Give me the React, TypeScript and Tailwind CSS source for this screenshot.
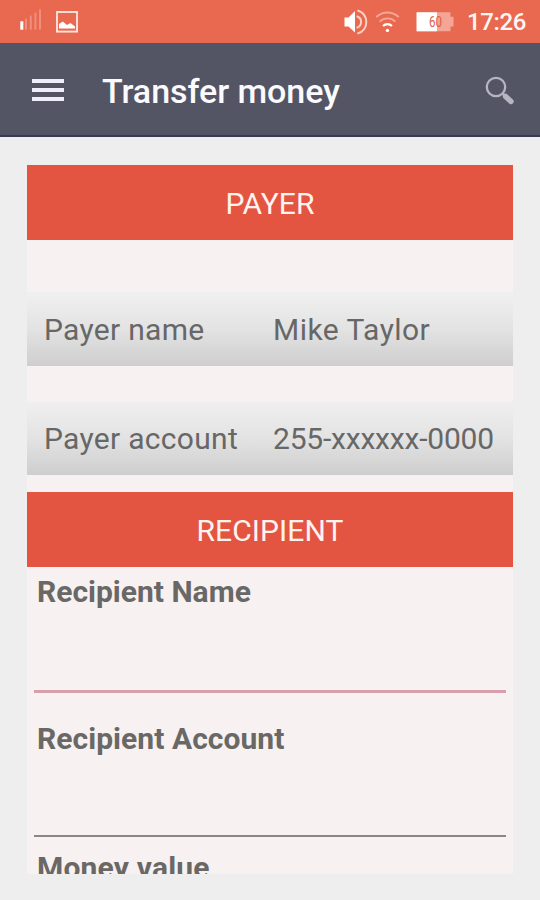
import React from "react";

const payerRows = [
  { label: "Payer name", value: "Mike Taylor", spacing: "mt-[52px]", tracking: "tracking-[0.45px]" },
  { label: "Payer account", value: "255-xxxxxx-0000", spacing: "mt-[35px]", tracking: "tracking-[-0.2px]" },
];

const SignalIcon = () => (
  <svg className="w-[22px] h-[22px]" viewBox="0 0 22 22" fill="#fff">
    <rect x="0.3" y="12.3" width="3" height="8.4" />
    <rect x="5" y="9.6" width="2" height="11.1" opacity="0.25" />
    <rect x="9.8" y="6.6" width="2" height="14.1" opacity="0.25" />
    <rect x="14.4" y="3.6" width="2" height="17.1" opacity="0.25" />
    <rect x="19" y="0.3" width="2" height="20.4" opacity="0.25" />
  </svg>
);

const PictureIcon = () => (
  <svg className="w-[22px] h-[22px]" viewBox="0 0 22 22">
    <rect x="1" y="1" width="20" height="19.6" fill="none" stroke="#fde3dc" strokeWidth="1.9" />
    <path d="M3 17.4V13L6.8 10.6L11 14L14.4 12L19 15.4V17.4Z" fill="#fff" />
  </svg>
);

const VolumeIcon = () => (
  <svg className="w-[25px] h-[26px]" viewBox="0 0 25 26" fill="none">
    <path d="M0.5 8.5H4.5L11 2V23.5L4.5 17.5H0.5Z" fill="#fff" />
    <path d="M12.6 7.2C18.6 8.8 18.6 17 12.6 18.8" stroke="#fbd0c5" strokeWidth="2" />
    <path d="M13.4 1.6C25.3 4 25.3 22 13.4 24.6" stroke="#fbd0c5" strokeWidth="2" />
  </svg>
);

const WifiIcon = () => (
  <svg className="w-[26px] h-[22px]" viewBox="0 0 26 22" fill="none">
    <path d="M1.2 6C8 0 17 0 23.8 6" stroke="#f5a795" strokeWidth="1.8" />
    <path d="M4.6 10.6C9.2 6.4 15.8 6.4 20.4 10.6" stroke="#f5a795" strokeWidth="1.8" />
    <path d="M8 15C10.6 12.4 14.4 12.4 17 15" stroke="#fff" strokeWidth="2.2" />
    <circle cx="12.5" cy="19.4" r="1.7" fill="#fff" />
  </svg>
);

const BatteryIcon = () => (
  <svg className="w-[39px] h-[20px]" viewBox="0 0 39 20">
    <path d="M1 0.3H34.5V4.8H37.5V14.6H34.5V19.3H1Z" fill="#f4a595" />
    <path d="M0.5 0.3H21V19.3H0.5Z" fill="#fff" />
    <text x="19.4" y="14.6" textAnchor="middle" fontFamily="Roboto, sans-serif" fontSize="14" fill="#d9604a" textLength="13" lengthAdjust="spacingAndGlyphs">
      60
    </text>
  </svg>
);

const SearchIcon = () => (
  <svg className="w-[29px] h-[29px]" viewBox="0 0 29 29" fill="none" stroke="#b5b6c1">
    <circle cx="11" cy="11" r="9.2" strokeWidth="2.3" />
    <path d="M17.4 17.4L20 20" strokeWidth="2.6" />
    <path d="M20.6 20.4L26 25.4" strokeWidth="5.4" strokeLinecap="round" />
  </svg>
);

const SectionTitle = ({ children }: { children: React.ReactNode }) => (
  <h2 className="flex h-[75px] shrink-0 items-center justify-center bg-[#e35541] pt-[3px] text-[30px] leading-none tracking-[0.1px] text-[#fff3ef]">
    {children}
  </h2>
);

const App = () => {
  return (
    <div className="flex h-[900px] w-[540px] flex-col overflow-hidden bg-[#eeeeee] font-[Roboto,sans-serif]">
      <div className="flex h-[43px] shrink-0 items-center bg-[#e96950] pl-5 pr-[14px]">
        <div className="flex items-center gap-[14px]">
          <div className="-mt-[3px]">
            <SignalIcon />
          </div>
          <PictureIcon />
        </div>
        <div className="ml-auto flex items-center pt-px">
          <VolumeIcon />
          <div className="ml-[6px]">
            <WifiIcon />
          </div>
          <div className="ml-[15px]">
            <BatteryIcon />
          </div>
          <span className="ml-[12px] text-[24px] font-medium leading-none tracking-[-0.4px] text-[#fff5f1]">17:26</span>
        </div>
      </div>

      <header className="flex h-[94px] shrink-0 items-center border-b-2 border-[#3b3a55] bg-[#545564] pl-8 pr-[26px]">
        <button className="flex flex-col gap-[5px] pt-[2px]">
          <span className="h-1 w-8 bg-[#eeeffa]" />
          <span className="h-1 w-8 bg-[#eeeffa]" />
          <span className="h-1 w-8 bg-[#eeeffa]" />
        </button>
        <h1 className="ml-[38px] pt-[3px] text-[34px] font-medium leading-none tracking-[-0.05px] text-[#fafaff]">Transfer money</h1>
        <button className="ml-auto pt-[2px]">
          <SearchIcon />
        </button>
      </header>

      <main className="mx-[27px] mt-7 flex h-[709px] w-[486px] shrink-0 flex-col overflow-hidden bg-[#f7f2f1] text-[30px] leading-none text-[#676767]">
        <SectionTitle>PAYER</SectionTitle>
        {payerRows.map(({ label, value, spacing, tracking }) => (
          <div key={label} className={`${spacing} flex h-[74px] shrink-0 items-center bg-linear-to-b from-[#f0f0f0] via-[#e3e3e3] to-[#cecece] pl-[17px] pt-px`}>
            <span className="w-[229px] tracking-[0.3px]">{label}</span>
            <span className={tracking}>{value}</span>
          </div>
        ))}
        <div className="mt-[17px] flex flex-col">
          <SectionTitle>RECIPIENT</SectionTitle>
        </div>
        <div className="flex flex-col px-[7px] font-bold text-[#696866]">
          <label className="h-[126px] border-b-[3px] border-[#d99fac] pl-[3px] pt-[10px]">Recipient Name</label>
          <label className="mt-[31px] h-[113px] border-b-2 border-[#8b8787] pl-[3px] tracking-[0.05px]">Recipient Account</label>
          <label className="mt-4 pl-[3px] tracking-[0.2px]">Money value</label>
        </div>
      </main>
    </div>
  );
};

export default App;
